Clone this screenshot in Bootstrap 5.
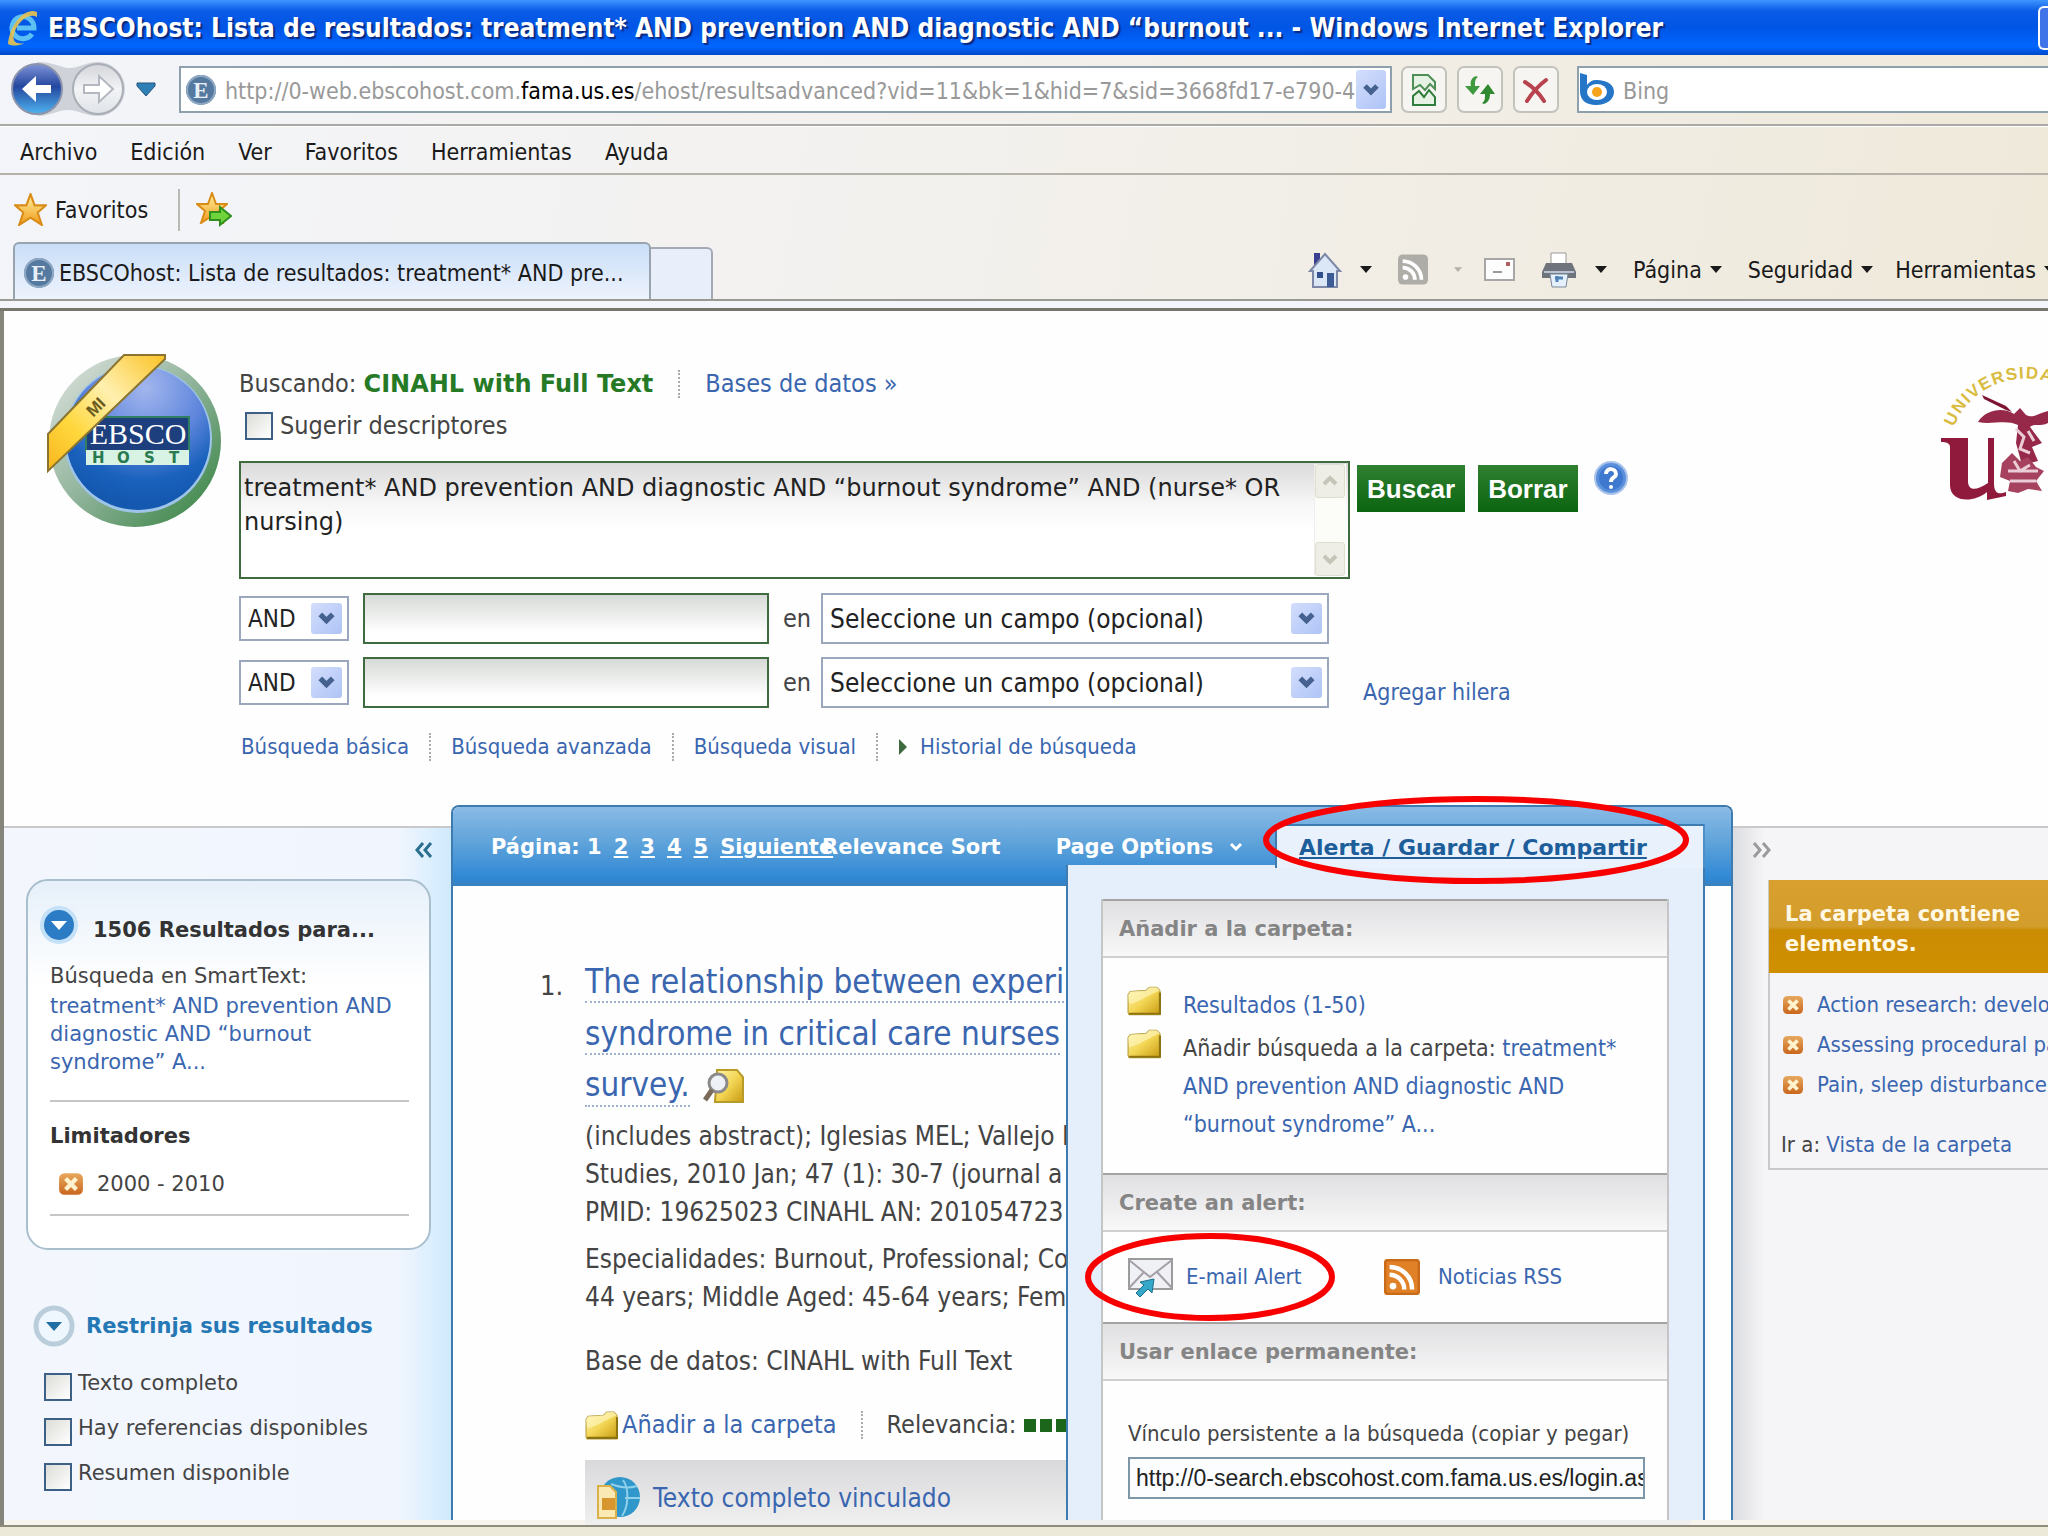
<!DOCTYPE html>
<html lang="es">
<head>
<meta charset="utf-8">
<meta name="viewport" content="width=device-width, initial-scale=1">
<title>EBSCOhost: Lista de resultados</title>
<link href="https://cdn.jsdelivr.net/npm/bootstrap@5.3.0/dist/css/bootstrap.min.css" rel="stylesheet">
<style>
body{font-family:"DejaVu Sans Condensed","Noto Sans",sans-serif;font-size:22px;line-height:28px;color:#444;background:#ece9d8}
a{color:#3a66b0;text-decoration:none}
svg{display:block;flex:none}
.nw{white-space:nowrap}
.wide{font-family:"DejaVu Sans","Noto Sans",sans-serif}
.chrome{background:linear-gradient(100deg,#f3f5fa 0,#f3f1ee 45%,#efe9da 100%);color:#1a1a1a;font-size:23px}
.titlebar{height:55px;padding-left:6px;background:linear-gradient(#3d95ff 0,#0a5be6 20%,#0055e5 50%,#0066ff 85%,#0048c8 100%);color:#fff;font-size:26px;font-weight:700;text-shadow:2px 2px 1px #0a2a80}
.winbtn{width:10px;height:44px;border:2px solid #fff;border-right:0;border-radius:6px 0 0 6px;background:#3f74e8}
.addr-row{height:71px;border-bottom:2px solid #a9a9a6;padding-left:10px}
.addr{height:47px;border:2px solid #8fa0ad;background:#fff}
.addr .url{width:1213px;color:#999;padding-top:3px}
.addrbox{width:1213px;margin-left:15px}
.addr input{border:0;background:none;outline:0;color:#999;padding:3px 0 0}
.drop{width:30px;height:39px;background:linear-gradient(135deg,#d3defc,#aec3f6);border-radius:3px}
.tbtn{width:46px;height:47px;border:2px solid #c3c3bd;border-radius:7px;background:#f6f5f1}
.menu-row{height:49px;border-bottom:2px solid #b5b2aa;border-top:1px solid #fff;padding:4px 0 0 20px;gap:33px}
.menu-row a,.tools a{color:#1a1a1a}
.fav-row{height:69px;padding-left:14px}
.fav-sep{width:2px;height:42px;background:#b9b9b4;margin:0 16px 0 30px}
.tabs-row{height:57px;padding-left:13px;border-bottom:2px solid #9a9a95}
.tab-on{width:638px;height:57px;border:2px solid #98a3ad;border-bottom:0;border-radius:6px 6px 0 0;background:linear-gradient(#c9def8,#eef3fd);padding:3px 0 0 8px}
.tab-new{width:62px;height:52px;border:2px solid #a5aab4;border-left:0;border-bottom:0;border-radius:0 6px 0 0;background:#e9eefb}
.tools{width:740px;gap:18px;padding-bottom:4px}
.page-top{height:10px;background:#f4f4fb;border-bottom:3px solid #77756c}
.viewport-area{background:#fefefe;border-left:4px solid #85857c;overflow:hidden;min-height:0}
.statusbar{height:11px;background:#ece9d8;border-top:2px solid #8f8c7c}
.gutter{border-top:5px solid #f6f4ec}
.logo-col{width:235px;padding:42px 0 0 42px}
.form-col{padding-top:55px}
.l24{font-size:25px;line-height:36px}
.dots{width:0;height:28px;border-left:2px dotted #aaa}
.green{color:#267a26;font-size:24px}
.xp-check{appearance:none;width:28px;height:28px;border:2px solid #3c5f85;background:linear-gradient(135deg,#dcdcd7,#fff);border-radius:0;margin:0;flex:none}
.query{width:1111px;height:118px}
.query textarea,.termbox{width:100%;height:100%;border:2px solid #3f6b3f;outline:0;background:linear-gradient(#dadada 0,#f6f6f6 35%,#fff 60%);color:#222}
.query textarea{font-size:24px;line-height:34px;padding:8px 56px 0 3px;resize:none;overflow:hidden;display:block}
.vscroll{position:absolute;right:4px;top:3px;bottom:3px;width:32px;background:#fcfcf9;border-left:1px solid #eee}
.vscroll div{width:30px;height:34px;background:#efeee6;border:1px solid #e0ded0;border-radius:3px}
.gobtn{height:47px;border:0;border-radius:0;background:linear-gradient(#2f8030,#0b6510);color:#fff;font:700 26px/49px "Liberation Sans",sans-serif;padding:0 10px}
.pick{height:45px}
.pick.big{height:51px;width:508px}
.pick.op{width:110px}
.pick select{appearance:none;width:100%;height:100%;border:2px solid #9aa7bd;background:#fff;color:#222;font-size:26px;padding:0 7px;border-radius:0}
.pick.op select{font-size:24px}
.pick .arrow{position:absolute;right:7px;top:7px;width:31px;height:31px;border-radius:3px;background:linear-gradient(135deg,#d3defc,#aec3f6);pointer-events:none}
.pick.big .arrow{top:10px}
.termbox{width:406px;height:51px;margin:0 14px;background:linear-gradient(#d6dad6,#fff 80%)}
.en{margin-right:10px}
.modes{margin:22px 0 41px 2px;height:34px}
.modes .dots{margin:0 20px}
.side{margin-top:21px;border-top:2px solid #c9c9cb}
.side-l{width:447px;background:linear-gradient(90deg,#f3f6fd 0,#f1f6fe 88%,#cfeafd 100%);font-size:21px;padding:0 20px 0 22px}
.side-r{width:315px;background:linear-gradient(90deg,#dcdde0 0,#f5f5f8 10%,#f5f5f8 100%);overflow:hidden}
.collapse-l{height:51px;padding:14px 0 0 389px}
.sumbox{border:2px solid #a9bfce;border-radius:22px;background:linear-gradient(#e6f0fa 0,#fff 28%);height:371px;padding:24px 20px 0 22px}
.rule{border-top:2px solid #c6c6c6;margin:0}
.hbold{font-weight:700;font-size:21px;color:#333}
.filter{height:45px;padding-left:18px;gap:6px;line-height:36px}
.main{border:2px solid #3d7bb0;border-bottom:0;border-radius:8px 8px 0 0;background:#fefefe;min-width:0}
.mainhead{height:79px;background:linear-gradient(#8abbe6 0,#5fa3da 45%,#2f88d5 90%,#3a80bd 100%);color:#fff;font-weight:700;font-size:21px;padding-left:38px;border-radius:6px 6px 0 0}
.mainhead a{color:#fff}
.mainhead a.ul{text-decoration:underline}
.pager{width:331px;gap:12px}
.alert-tab{position:absolute;right:26px;top:17px;width:430px;height:44px;background:#e8f1fc;border:2px solid #3d7bb0;border-bottom:0;border-right-color:#4f8fc8;z-index:3;padding-left:22px;font-size:22px;font-weight:700;line-height:44px}
.alert-tab a{color:#1d5e9a;text-decoration:underline}
.ring{position:absolute;z-index:5;pointer-events:none}
.alert-tab .ring{left:-14px;top:-30px}
.mail-row{height:90px;padding-left:25px}
.mail-row .ring{left:-18px;top:1px}
.alert-menu{position:absolute;right:26px;top:58px;bottom:0;width:639px;background:#e4effb;border:2px solid #3d7bb0;border-top:0;border-bottom:0;padding:34px 34px 0 33px;z-index:2}
.sect{border:2px solid #c5c5c8;border-top:0;border-bottom:0;background:#fefefe;height:100%}
.sect h3{margin:0;height:59px;font-size:21px;line-height:57px;font-weight:700;color:#858585;padding-left:16px;background:linear-gradient(#e0dfe1,#f8f8f9);border-top:2px solid #a3a3a3;border-bottom:2px solid #d0d0d0}
.folder-add{height:215px;padding:28px 0 0 24px;font-size:23px}
.lh38{line-height:38px}
.plink{width:517px;height:42px;border:2px solid #7d97a8;border-radius:0;background:#fbfdff;font:23px "Liberation Sans",sans-serif;color:#222;padding:0 0 0 6px;outline:0}
.result{padding:70px 0 0 87px}
.rnum{width:45px;font-size:27px;line-height:60px}
.rtitle{font-size:33px;line-height:52px}
.rtitle a{border-bottom:2px dotted #9db3cf}
.rlast{height:52px;gap:13px}
.rlast a{line-height:40px}
.rbody{font-size:26px;line-height:38px;padding-top:5px}
.racts{font-size:25px;margin-top:26px;gap:4px}
.racts .dots{margin:0 20px}
.sq{width:12px;height:13px;background:#1c661c}
.ftbar{height:90px;background:linear-gradient(#d9d9db,#efeff0 70%);font-size:26px;padding:16px 0 0 10px;margin:16px 40px 0 0;gap:12px}
.folderbox{margin:52px 0 0 35px;width:320px;border:2px solid #c9c9c9;background:#f5f5f8;height:290px}
.folderbox h3{height:93px;margin:-2px 0 0 -1px;background:linear-gradient(#d9a02f 0,#d39d2b 50%,#cb8c04 54%,#cf9000 100%);color:#fff8e4;font-size:21px;line-height:30px;font-weight:700;padding:19px 0 0 16px}
.fitem{height:40px;padding-left:12px;gap:13px}
</style>
</head>
<body class="vh-100 overflow-hidden d-flex flex-column">
<svg width="0" height="0" class="position-absolute" aria-hidden="true">
<defs>
<linearGradient id="gy" x1="0" y1="0" x2="1" y2="1"><stop offset="0" stop-color="#fff3a8"/><stop offset=".5" stop-color="#f3d655"/><stop offset="1" stop-color="#c79a10"/></linearGradient>
<linearGradient id="go" x1="0" y1="0" x2="0" y2="1"><stop offset="0" stop-color="#e8a95e"/><stop offset="1" stop-color="#c9661e"/></linearGradient>
<linearGradient id="gb" x1="0" y1="0" x2="0" y2="1"><stop offset="0" stop-color="#7f93d8"/><stop offset=".45" stop-color="#24479f"/><stop offset="1" stop-color="#4fb4f0"/></linearGradient>
<linearGradient id="gs" x1="0" y1="0" x2="0" y2="1"><stop offset="0" stop-color="#fff2a0"/><stop offset="1" stop-color="#f09a1a"/></linearGradient>
<linearGradient id="gf" x1="0" y1="0" x2="0" y2="1"><stop offset="0" stop-color="#d3d5da"/><stop offset=".5" stop-color="#f2f3f5"/><stop offset="1" stop-color="#dfe3e8"/></linearGradient>
<symbol id="folder" viewBox="0 0 32 28"><path d="M1 8 3 5 18 4 21 1H28L31 4V27H2L1 25Z" fill="url(#gy)" stroke="#b39a3a" stroke-width="1"/><path d="M1 8 3 5 18 4 21 1H28L31 4C20 8 14 14 2 17Z" fill="#fff8c4" opacity=".6"/><path d="M2 26H31V6" fill="none" stroke="#8d7410" stroke-width="2"/></symbol>
<symbol id="cross" viewBox="0 0 24 22"><rect x="1" y="1" width="22" height="20" rx="5" fill="url(#go)"/><path d="M7 6 17 16M17 6 7 16" stroke="#fff3cf" stroke-width="4"/></symbol>
<symbol id="chev" viewBox="0 0 30 30"><path d="M9 11 15 17 21 11" fill="none" stroke="#44618f" stroke-width="5"/></symbol>
<symbol id="efav" viewBox="0 0 32 32"><circle cx="16" cy="16" r="15" fill="#56799f"/><circle cx="16" cy="16" r="14" fill="none" stroke="#8fa9c4" stroke-width="2"/><text x="16" y="24" text-anchor="middle" font-family="Liberation Serif,serif" font-weight="700" font-size="23" fill="#e6eff8">E</text></symbol>
<symbol id="rss" viewBox="0 0 32 32"><circle cx="8" cy="24" r="3" fill="#fff"/><path d="M5 14A13 13 0 0 1 18 27M5 7A20 20 0 0 1 25 27" fill="none" stroke="#fff" stroke-width="4"/></symbol>
<symbol id="star" viewBox="0 0 32 32"><path d="M16 1 20 12 31 12 23 19 27 31 16 24 5 31 9 19 1 12 12 12Z" fill="url(#gs)" stroke="#d98c17" stroke-width="2"/></symbol>
<symbol id="tri" viewBox="0 0 12 8"><path d="M0 0H12L6 7Z" fill="currentColor"/></symbol>
</defs>
</svg>

<header class="chrome flex-shrink-0">
<div class="titlebar d-flex align-items-center nw">
<svg width="34" height="38" viewBox="0 0 34 38"><path d="M26 25A11 11 0 1 1 28 19H11" fill="none" stroke="#5cc0f5" stroke-width="5"/><path d="M31 3C20 -2 4 14 2 35C8 38 16 36 18 34C10 36 6 32 8 25C11 14 22 3 31 8Z" fill="#e9c34d" opacity=".9"/></svg>
<span class="ms-2">EBSCOhost: Lista de resultados: treatment* AND prevention AND diagnostic AND “burnout ... - Windows Internet Explorer</span>
<span class="winbtn ms-auto"></span>
</div>
<div class="addr-row d-flex align-items-center">
<svg width="118" height="60" viewBox="0 0 118 60"><path d="M27 2C45 2 50 8 60 8S75 2 88 2A27 27 0 0 1 88 56C74 56 70 50 58 50S42 56 27 56Z" fill="#cfd2d8"/><circle cx="27" cy="29" r="25" fill="url(#gb)" stroke="#8b93ad" stroke-width="2"/><circle cx="88" cy="29" r="25" fill="url(#gf)" stroke="#a9aeb6" stroke-width="2"/><path d="M12 29 26 16V25H41V33H26V42Z" fill="#fff"/><path d="M103 29 89 16V25H74V33H89V42Z" fill="#fff" stroke="#b3b8c0" stroke-width="2"/></svg>
<svg width="20" height="15" viewBox="0 0 20 15" class="mx-2"><path d="M1 1H19V4L10 14 1 4Z" fill="#2e7fb5" stroke="#24557b"/></svg>
<div class="addr addrbox d-flex align-items-center nw">
<svg width="32" height="32" class="ms-1 me-2"><use href="#efav"/></svg>
<span class="url flex-shrink-1 overflow-hidden">http://0-web.ebscohost.com.<span class="text-black">fama.us.es</span>/ehost/resultsadvanced?vid=11&amp;bk=1&amp;hid=7&amp;sid=3668fd17-e790-4</span>
<button type="button" class="drop border-0 p-0 me-1 flex-shrink-0" aria-label="Mostrar direcciones"><svg width="30" height="36"><use href="#chev"/></svg></button>
</div>
<div class="d-flex" style="gap:10px;margin:0 18px 0 9px">
<button type="button" class="tbtn p-0 d-flex align-items-center justify-content-center" aria-label="Vista de compatibilidad"><svg width="26" height="34" viewBox="0 0 26 34"><path d="M2 16V2H17L24 9V16L19 11 14 17 9 12Z" fill="#e6f3e4" stroke="#4f8f56" stroke-width="2"/><path d="M2 32V23L8 18 13 24 18 17 24 24V32Z" fill="#e6f3e4" stroke="#2f7d3a" stroke-width="2"/></svg></button>
<button type="button" class="tbtn p-0 d-flex align-items-center justify-content-center" aria-label="Actualizar"><svg width="32" height="34" viewBox="0 0 32 34"><path d="M12 3C7 5 6 9 7 13H1L9 22 16 13H11C11 8 11 6 14 4Z" fill="#3f9a3f"/><path d="M20 31C25 29 26 25 26 21H31L24 11 16 21H21C21 26 21 28 18 30Z" fill="#2f8a2f"/></svg></button>
<button type="button" class="tbtn p-0 d-flex align-items-center justify-content-center" aria-label="Detener"><svg width="26" height="26" viewBox="0 0 26 26"><path d="M2 5C10 10 16 16 21 24M23 3C15 9 9 16 4 24" fill="none" stroke="#b8424e" stroke-width="4" stroke-linecap="round"/></svg></button>
</div>
<div class="addr flex-grow-1 d-flex align-items-center border-end-0">
<svg width="36" height="34" viewBox="0 0 36 34" class="me-2"><path d="M1 0 8 2V18H1Z" fill="#2676c8"/><path d="M17 7C29 7 35 12 35 19S28 32 17 32C7 32 1 27 1 18L8 12C10 9 13 7 17 7Z" fill="#2676c8"/><ellipse cx="18" cy="19" rx="10" ry="8" fill="#fff"/><circle cx="18" cy="19" r="5" fill="#f5a21c"/></svg>
<input type="text" class="flex-grow-1 w-50" value="Bing" aria-label="Buscar con Bing">
</div>
</div>
<nav class="menu-row d-flex align-items-center">
<a href="#">Archivo</a><a href="#">Edición</a><a href="#">Ver</a><a href="#">Favoritos</a><a href="#">Herramientas</a><a href="#">Ayuda</a>
</nav>
<div class="fav-row d-flex align-items-center">
<svg width="33" height="33"><use href="#star"/></svg><span class="ms-2">Favoritos</span>
<span class="fav-sep"></span>
<svg width="36" height="36" viewBox="0 0 36 36"><use href="#star" width="32" height="32"/><path d="M14 20H24V15L35 24 24 33V28H14Z" fill="#6fd33c" stroke="#2f8f1f" stroke-width="2"/></svg>
</div>
<div class="tabs-row d-flex align-items-end">
<div class="tab-on d-flex align-items-center nw"><svg width="32" height="32" class="me-1"><use href="#efav"/></svg><span>EBSCOhost: Lista de resultados: treatment* AND pre...</span></div>
<div class="tab-new"></div>
<div class="tools ms-auto d-flex align-items-center nw h-100">
<svg width="34" height="38" viewBox="0 0 34 38"><path d="M6 2H12V10L6 15Z" fill="#3b3f8f"/><path d="M17 3 32 20H29V36H5V20H2Z" fill="#dbe6f6" stroke="#7c88a6" stroke-width="2"/><rect x="9" y="21" width="6" height="6" fill="#34508c"/><rect x="19" y="22" width="7" height="14" fill="#3d5c96"/></svg>
<svg width="12" height="8"><use href="#tri"/></svg>
<svg width="30" height="31" viewBox="0 0 32 32" class="ms-2"><rect width="32" height="32" rx="5" fill="#aeada8"/><use href="#rss" width="32" height="32"/></svg>
<svg width="8" height="6" class="text-black-50 opacity-50 ms-2"><use href="#tri"/></svg>
<svg width="31" height="23" viewBox="0 0 31 23" class="ms-1"><rect x="1" y="1" width="29" height="21" fill="#fdfdfd" stroke="#a7a7a7" stroke-width="2"/><rect x="22" y="4" width="4" height="4" fill="#b06060"/><path d="M9 14H18" stroke="#999" stroke-width="2"/></svg>
<svg width="36" height="36" viewBox="0 0 36 36" class="ms-2"><path d="M10 1H25V12H10Z" fill="#fff" stroke="#999"/><path d="M5 11H31L35 20V26H1V20Z" fill="#6f747c"/><path d="M3 20H33" stroke="#b9c3d2" stroke-width="2"/><path d="M9 22H27L25 35H11Z" fill="#e4f0fb" stroke="#7a8797"/><path d="M14 26H22M16 30V24" stroke="#4f81b5" stroke-width="3"/></svg>
<svg width="12" height="8"><use href="#tri"/></svg>
<a href="#" class="d-flex align-items-center gap-2 ms-2">Página <svg width="12" height="8"><use href="#tri"/></svg></a>
<a href="#" class="d-flex align-items-center gap-2 ms-2">Seguridad <svg width="12" height="8"><use href="#tri"/></svg></a>
<a href="#" class="d-flex align-items-center gap-2 ms-1">Herramientas <svg width="12" height="8"><use href="#tri"/></svg></a>
</div>
</div>
<div class="page-top"></div>
</header>

<main class="viewport-area flex-grow-1 d-flex flex-column">
<section class="d-flex flex-shrink-0">
<div class="logo-col flex-shrink-0">
<svg width="176" height="176" viewBox="0 0 176 176">
<defs><linearGradient id="ring" x1="0" y1="0" x2="1" y2="1"><stop offset="0" stop-color="#e4e6e4"/><stop offset=".5" stop-color="#8fb39a"/><stop offset="1" stop-color="#2f7f3a"/></linearGradient>
<radialGradient id="ball" cx=".55" cy=".15" r=".8"><stop offset="0" stop-color="#a3b6ee"/><stop offset=".5" stop-color="#5f86dc"/><stop offset=".8" stop-color="#1a62bd"/><stop offset="1" stop-color="#1458b0"/></radialGradient>
<linearGradient id="band" x1="0" y1="1" x2="1" y2="0"><stop offset="0" stop-color="#f7b61c"/><stop offset=".3" stop-color="#ffd83e"/><stop offset=".6" stop-color="#fff0b0"/><stop offset="1" stop-color="#fbc324"/></linearGradient></defs>
<circle cx="89" cy="88" r="86" fill="url(#ring)"/><circle cx="92" cy="86" r="74" fill="#9ec4e8"/><circle cx="92" cy="85" r="72" fill="url(#ball)"/>
<rect x="40" y="64" width="103" height="34" fill="#1d3f7d" stroke="#2f7f62" stroke-width="2"/><rect x="40" y="97" width="103" height="15" fill="#d8f3e4"/>
<text x="92" y="91" text-anchor="middle" font-family="Liberation Serif,serif" font-size="30" fill="#fff">EBSCO</text>
<g font-family="DejaVu Sans,sans-serif" font-weight="700" font-size="15" fill="#2a7a50"><text x="46" y="110">H</text><text x="71" y="110">O</text><text x="98" y="110">S</text><text x="123" y="110">T</text></g>
<path d="M2 81 78 2H119V6L2 118Z" fill="url(#band)" stroke="#8a7430" stroke-width="2"/><text transform="translate(54 58) rotate(-45)" text-anchor="middle" font-family="Liberation Sans,sans-serif" font-weight="700" font-size="17" fill="#6b5a20">MI</text>
</svg>
</div>
<form class="form-col flex-grow-1" onsubmit="return false">
<div class="d-flex align-items-center l24 nw"><span>Buscando: <strong class="green wide">CINAHL with Full Text</strong></span><span class="dots" style="margin:0 25px"></span><a href="#">Bases de datos »</a></div>
<div class="d-flex align-items-center l24" style="margin:6px 0 17px 6px"><input class="xp-check" type="checkbox" id="sug"><label for="sug" style="margin-left:7px">Sugerir descriptores</label></div>
<div class="d-flex align-items-start">
<div class="query position-relative"><textarea class="wide" aria-label="Consulta">treatment* AND prevention AND diagnostic AND “burnout syndrome” AND (nurse* OR nursing)</textarea>
<div class="vscroll d-flex flex-column justify-content-between"><div><svg width="28" height="32" viewBox="0 0 28 32"><path d="M8 19 14 13 20 19" fill="none" stroke="#c6c4b8" stroke-width="4"/></svg></div><div><svg width="28" height="32" viewBox="0 0 28 32"><path d="M8 13 14 19 20 13" fill="none" stroke="#c6c4b8" stroke-width="4"/></svg></div></div></div>
<button class="gobtn" style="margin:4px 13px 0 7px">Buscar</button><button type="button" class="gobtn mt-1">Borrar</button>
<svg width="34" height="34" viewBox="0 0 34 34" class="ms-3"><circle cx="17" cy="17" r="16" fill="#5a8fdc" stroke="#a9c3ea" stroke-width="2"/><circle cx="17" cy="17" r="12" fill="#3f78cf"/><path d="M12 13C12 6 22 7 22 13 22 17 17 16 17 21" fill="none" stroke="#fff" stroke-width="4"/><circle cx="17" cy="26" r="2" fill="#fff"/></svg>
</div>
<div class="d-flex align-items-center l24" style="margin-top:14px">
<div class="pick op position-relative"><select aria-label="Operador 1"><option>AND</option></select><svg class="arrow" viewBox="0 0 30 30"><use href="#chev"/></svg></div>
<input type="text" class="termbox" aria-label="Término 2"><span class="en">en</span>
<div class="pick big position-relative"><select aria-label="Campo 1"><option>Seleccione un campo (opcional)</option></select><svg class="arrow" viewBox="0 0 30 30"><use href="#chev"/></svg></div>
</div>
<div class="d-flex align-items-center l24" style="margin-top:13px">
<div class="pick op position-relative"><select aria-label="Operador 2"><option>AND</option></select><svg class="arrow" viewBox="0 0 30 30"><use href="#chev"/></svg></div>
<input type="text" class="termbox" aria-label="Término 3"><span class="en">en</span>
<div class="pick big position-relative"><select aria-label="Campo 2"><option>Seleccione un campo (opcional)</option></select><svg class="arrow" viewBox="0 0 30 30"><use href="#chev"/></svg></div>
<a href="#" class="align-self-end" style="font-size:23px;line-height:32px;margin-left:34px">Agregar hilera</a>
</div>
<div class="modes d-flex align-items-center nw"><a href="#">Búsqueda básica</a><span class="dots"></span><a href="#">Búsqueda avanzada</a><span class="dots"></span><a href="#">Búsqueda visual</a><span class="dots"></span><svg width="10" height="16" style="margin-right:12px"><path d="M1 0 9 8 1 16Z" fill="#3f6a3f"/></svg><a href="#">Historial de búsqueda</a></div>
</form>
<svg width="108" height="200" viewBox="0 0 108 200">
<path id="arc" d="M14 116A77 74 0 0 1 150 100" fill="none"/>
<text font-family="Liberation Sans,sans-serif" font-weight="700" font-size="17" fill="#d9bb3f"><textPath href="#arc">U&#8202;N&#8202;I&#8202;V&#8202;E&#8202;R&#8202;S&#8202;I&#8202;D&#8202;A&#8202;D</textPath></text>
<path d="M1 127H28V170C28 180 36 180 48 172V127H54V172C54 182 58 184 66 181V185L47 189V181C34 192 10 192 10 174V136C10 132 6 131 1 131Z" fill="#8f1a3c"/>
<path d="M42 84 66 95 72 101 66 99 44 88Z" fill="#7d1533"/><path d="M38 111C46 98 64 96 74 103L80 97 86 104C94 108 98 102 108 100V112C100 116 94 112 90 116L102 132 92 136 98 150 82 154 76 132 78 114C66 108 52 114 38 111Z" fill="#96284a"/>
<path d="M62 152 72 142 80 150 88 146 96 156 104 160 96 170 102 180 88 178 78 182 68 180 70 170 60 166Z" fill="#a64260"/><path d="M76 118 84 126 80 138 90 142M68 160H98M70 170H96M88 120 94 130M74 150 80 160 90 154" stroke="#eacdd6" stroke-width="3" fill="none"/>
</svg>
</section>

<section class="d-flex flex-grow-1" style="min-height:0">
<aside class="side side-l wide flex-shrink-0">
<div class="collapse-l"><svg width="18" height="16" viewBox="0 0 18 16"><path d="M8 1 2 8 8 15M16 1 10 8 16 15" fill="none" stroke="#2a6f8f" stroke-width="3"/></svg></div>
<div class="sumbox">
<div class="d-flex align-items-center"><svg width="40" height="40" viewBox="0 0 40 40" style="margin:0 14px 0 -11px"><circle cx="20" cy="20" r="19" fill="#c5e1f7"/><circle cx="20" cy="20" r="15" fill="#2b7cc4"/><path d="M12 16H28L20 25Z" fill="#fff"/></svg><span class="hbold nw" style="padding-top:10px">1506 Resultados para...</span></div>
<div style="margin-top:15px;line-height:32px">Búsqueda en SmartText:</div>
<a href="#" class="d-block nw">treatment* AND prevention AND<br>diagnostic AND “burnout<br>syndrome” A...</a>
<hr class="rule opacity-100" style="margin-top:24px">
<div class="hbold" style="margin-top:20px">Limitadores</div>
<div class="d-flex align-items-center" style="margin:20px 0 16px 8px;gap:13px"><svg width="26" height="24"><use href="#cross"/></svg>2000 - 2010</div>
<hr class="rule opacity-100">
</div>
<div class="d-flex align-items-center" style="margin:55px 0 18px 7px;gap:11px"><svg width="42" height="42" viewBox="0 0 42 42"><circle cx="21" cy="21" r="18" fill="#eef7fd" stroke="#b9cddb" stroke-width="5"/><path d="M13 17H29L21 26Z" fill="#1f6fa5"/></svg><span class="hbold nw" style="color:#2478b5">Restrinja sus resultados</span></div>
<div class="filter d-flex"><input type="checkbox" class="xp-check mt-2" id="c1"><label for="c1" class="nw">Texto completo</label></div>
<div class="filter d-flex"><input type="checkbox" class="xp-check mt-2" id="c2"><label for="c2" class="nw">Hay referencias disponibles</label></div>
<div class="filter d-flex"><input type="checkbox" class="xp-check mt-2" id="c3"><label for="c3" class="nw">Resumen disponible</label></div>
</aside>

<section class="main flex-grow-1 position-relative">
<div class="mainhead wide d-flex align-items-center nw">
<div class="pager d-flex"><span>Página: 1</span><a href="#" class="ul">2</a><a href="#" class="ul">3</a><a href="#" class="ul">4</a><a href="#" class="ul">5</a><a href="#" class="ul">Siguiente</a></div>
<a href="#">Relevance Sort</a>
<a href="#" class="d-flex align-items-center gap-3" style="margin-left:55px">Page Options <svg width="14" height="10" viewBox="0 0 14 10"><path d="M2 2 7 7 12 2" fill="none" stroke="#fff" stroke-width="3"/></svg></a>
</div>
<div class="alert-tab wide nw"><a href="#">Alerta / Guardar / Compartir</a>
<svg class="ring" width="426" height="88"><ellipse cx="213" cy="44" rx="210" ry="41" fill="none" stroke="#f80000" stroke-width="6"/></svg></div>
<div class="alert-menu">
<div class="sect">
<h3 class="wide">Añadir a la carpeta:</h3>
<div class="folder-add">
<div class="d-flex" style="gap:22px;height:43px"><svg width="34" height="30"><use href="#folder"/></svg><a href="#" class="lh38">Resultados (1-50)</a></div>
<div class="d-flex" style="gap:22px"><svg width="34" height="30"><use href="#folder"/></svg><div class="lh38 nw">Añadir búsqueda a la carpeta: <a href="#">treatment*<br>AND prevention AND diagnostic AND<br>“burnout syndrome” A...</a></div></div>
</div>
<h3 class="wide">Create an alert:</h3>
<div class="mail-row d-flex align-items-center position-relative nw">
<svg width="46" height="40" viewBox="0 0 46 40"><rect x="1" y="2" width="43" height="30" fill="#f0f1f4" stroke="#9b9b9b" stroke-width="2"/><path d="M1 3 22 20 44 3M1 31 16 15M44 31 29 15" fill="none" stroke="#a5a0a8" stroke-width="2"/><path d="M26 22 24 36 20 32 12 40 8 36 16 28 12 25Z" fill="#35a8c9" stroke="#1b6f8f"/></svg>
<a href="#" style="margin-left:12px;width:116px">E-mail Alert</a>
<svg width="36" height="36" viewBox="0 0 32 32" style="margin:0 18px 0 82px"><rect width="32" height="32" rx="3" fill="#e08027"/><rect x="1" y="1" width="30" height="30" rx="3" fill="none" stroke="#c96a18" stroke-width="2"/><use href="#rss" width="32" height="32"/></svg>
<a href="#">Noticias RSS</a>
<svg class="ring" width="250" height="88"><ellipse cx="125" cy="44" rx="122" ry="41" fill="none" stroke="#f80000" stroke-width="6"/></svg>
</div>
<h3 class="wide">Usar enlace permanente:</h3>
<div style="padding:34px 0 0 25px"><label for="pl" class="lh38 nw d-block">Vínculo persistente a la búsqueda (copiar y pegar)</label><input id="pl" class="plink mt-1" type="text" value="http://0-search.ebscohost.com.fama.us.es/login.aspx?direct=true"></div>
</div>
</div>
<article class="result d-flex">
<div class="rnum">1.</div>
<div class="nw flex-grow-1">
<div class="rtitle"><a href="#">The relationship between experi</a><br><a href="#">syndrome in critical care nurses</a><br><span class="rlast d-flex align-items-center"><a href="#">survey.</a> <svg width="42" height="36" viewBox="0 0 42 36"><path d="M14 2H34L40 9V34H12Z" fill="url(#gy)" stroke="#b89a28" stroke-width="2"/><circle cx="15" cy="15" r="9" fill="#eef2f6" stroke="#8a8a8a" stroke-width="3"/><path d="M9 22 2 32" stroke="#7a6a5a" stroke-width="5"/></svg></span></div>
<div class="rbody">
<div>(includes abstract); Iglesias MEL; Vallejo R<br>Studies, 2010 Jan; 47 (1): 30-7 (journal a<br>PMID: 19625023 CINAHL AN: 201054723</div>
<div style="margin-top:9px">Especialidades: Burnout, Professional; Cop<br>44 years; Middle Aged: 45-64 years; Fem</div>
<div style="margin-top:26px">Base de datos: CINAHL with Full Text</div>
<div class="racts d-flex align-items-center"><svg width="33" height="29"><use href="#folder"/></svg><a href="#">Añadir a la carpeta</a><span class="dots"></span><span class="me-1">Relevancia:</span><span class="sq"></span><span class="sq"></span><span class="sq"></span></div>
</div>
<div class="ftbar d-flex align-items-start"><svg width="46" height="44" viewBox="0 0 46 44"><circle cx="25" cy="21" r="20" fill="#2f97c9"/><path d="M28 4C34 12 34 30 27 40M16 8C26 12 36 12 42 10M30 22H45" stroke="#8fd0ea" stroke-width="2" fill="none"/><path d="M3 10H15L21 16V42H3Z" fill="#fbe9b4" stroke="#d9b04a" stroke-width="2"/><rect x="7" y="22" width="13" height="12" fill="#d9962e"/></svg><a href="#" class="pt-2">Texto completo vinculado</a></div>
</div>
</article>
</section>

<aside class="side side-r flex-shrink-0">
<svg width="20" height="16" viewBox="0 0 20 16" style="margin:14px 0 -30px 19px"><path d="M2 1 8 8 2 15M11 1 17 8 11 15" fill="none" stroke="#9a9a9a" stroke-width="3"/></svg>
<div class="folderbox nw">
<h3 class="wide">La carpeta contiene<br>elementos.</h3>
<div style="padding-top:12px">
<div class="fitem d-flex align-items-center"><svg width="22" height="20"><use href="#cross"/></svg><a href="#">Action research: develop</a></div>
<div class="fitem d-flex align-items-center"><svg width="22" height="20"><use href="#cross"/></svg><a href="#">Assessing procedural pain</a></div>
<div class="fitem d-flex align-items-center"><svg width="22" height="20"><use href="#cross"/></svg><a href="#">Pain, sleep disturbance</a></div>
</div>
<div style="margin:26px 0 0 11px">Ir a: <a href="#">Vista de la carpeta</a></div>
</div>
</aside>
</section>
<div class="gutter flex-shrink-0"></div>
</main>
<footer class="statusbar flex-shrink-0"></footer>
<script src="https://cdn.jsdelivr.net/npm/bootstrap@5.3.0/dist/js/bootstrap.bundle.min.js"></script>
</body>
</html>
